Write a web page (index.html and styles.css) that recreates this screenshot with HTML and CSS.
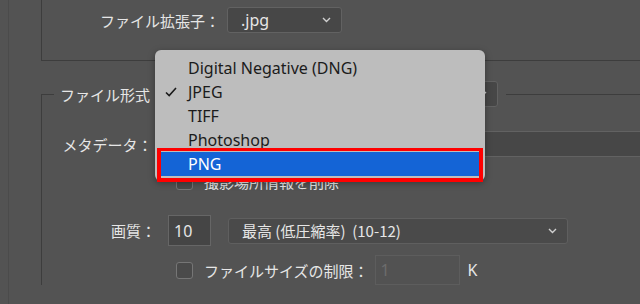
FILE: index.html
```html
<!DOCTYPE html>
<html lang="ja">
<head>
    <meta charset="UTF-8">
    <title>書き出し形式</title>
    <link rel="stylesheet" href="styles.css">
</head>
<body>
    <div class="panel">
        <div class="panel-inner">
            <div class="group-top">
                <div class="row-top">
                    <span class="label">ファイル拡張子：</span>
                    <div class="select select-ext">
                        <span>.jpg</span>
                        <svg class="chevron" width="9" height="6" viewBox="0 0 9 6"><polyline points="1,1 4.5,4.5 8,1"/></svg>
                    </div>
                </div>
            </div>

            <fieldset class="group-format">
                <legend>
                    <span class="legend-label">ファイル形式：</span>
                    <div class="select select-format">
                        <span></span>
                        <svg class="chevron" width="9" height="6" viewBox="0 0 9 6"><polyline points="1,1 4.5,4.5 8,1"/></svg>
                    </div>
                </legend>

                <div class="row row-meta">
                    <span class="label">メタデータ：</span>
                    <div class="select select-meta"></div>
                </div>

                <div class="row row-check">
                    <span class="checkbox"></span>
                    <span class="text">撮影場所情報を削除</span>
                </div>

                <div class="row row-quality">
                    <span class="label">画質：</span>
                    <div class="input input-quality">10</div>
                    <div class="select select-quality">
                        <span>最高 (低圧縮率)&nbsp; (10-12)</span>
                        <svg class="chevron" width="9" height="6" viewBox="0 0 9 6"><polyline points="1,1 4.5,4.5 8,1"/></svg>
                    </div>
                </div>

                <div class="row row-size">
                    <span class="checkbox"></span>
                    <span class="text">ファイルサイズの制限：</span>
                    <div class="input input-size">1</div>
                    <span class="text unit">K</span>
                </div>
            </fieldset>
        </div>
    </div>

    <!-- open format menu -->
    <div class="menu">
        <div class="menu-item">Digital Negative (DNG)</div>
        <div class="menu-item checked">
            <svg class="check" width="12" height="10" viewBox="0 0 12 10"><polyline points="1,5.5 4.2,8.6 11,1"/></svg>
            JPEG
        </div>
        <div class="menu-item">TIFF</div>
        <div class="menu-item">Photoshop</div>
        <div class="menu-item active">PNG</div>
    </div>
</body>
</html>
```

FILE: styles.css
```css
:root {
    --bg-color: #535353;
    --line-color: #3d3d3d;
    --field-color: #474747;
    --field-border: #626262;
    --text-color: #e6e6e6;
    --menu-color: #bdbdbd;
    --highlight-color: #1464d6;
}

html, body {
    margin: 0;
    padding: 0;
    height: 100%;
    overflow: hidden;
}

body {
    background-color: var(--bg-color);
    font-family: "Noto Sans CJK JP", "Noto Sans", sans-serif;
    font-size: 15px;
    color: var(--text-color);
    position: relative;
}

.panel {
    height: 100%;
    padding-left: 8px;
}

.panel-inner {
    height: 100%;
    border-left: 1px solid #4b4b4b;
    padding-left: 32px;
}

/* top group, only its left and bottom edge are on screen */
.group-top {
    box-sizing: border-box;
    height: 61px;
    margin-right: -10px;
    border-left: 1px solid var(--line-color);
    border-bottom: 1px solid var(--line-color);
}

.row-top {
    display: flex;
    align-items: center;
    padding-top: 7px;
    padding-left: 58px;
}

.row-top .label {
    width: 120px;
    margin-right: 7px;
}

.select {
    box-sizing: border-box;
    display: flex;
    align-items: center;
    justify-content: space-between;
    height: 26px;
    background-color: var(--field-color);
    border: 1px solid var(--field-border);
    border-radius: 3px;
    padding: 0 10px 0 13px;
    white-space: nowrap;
}

.chevron polyline {
    fill: none;
    stroke: #d0d0d0;
    stroke-width: 1.4;
}

.select-ext {
    width: 115px;
    font-family: "Noto Sans", sans-serif;
    font-size: 16px;
}

/* file format group */
.group-format {
    margin: 20px -10px 0 0;
    padding: 0;
    border: none;
    border-top: 1px solid var(--line-color);
    border-left: 1px solid var(--line-color);
    min-width: 0;
}

.group-format legend {
    display: flex;
    align-items: center;
    margin-left: 12px;
    padding: 0 8px 0 6px;
}

.legend-label {
    width: 105px;
    margin-right: 8px;
}

.select-format {
    width: 325px;
}

.row {
    display: flex;
    align-items: center;
}

.row .label {
    width: 114px;
    margin-right: 12px;
    text-align: right;
}

.row-meta {
    margin-top: 24px;
    height: 26px;
}

.select-meta {
    width: 500px;
}

.row-check {
    margin-top: 14px;
    height: 20px;
    padding-left: 134px;
}

.checkbox {
    box-sizing: border-box;
    width: 17px;
    height: 17px;
    border: 1px solid #767676;
    border-radius: 3px;
    background-color: #4a4a4a;
    margin-right: 11px;
    flex-shrink: 0;
}

.row-quality {
    margin-top: 24px;
    height: 31px;
}

.input {
    box-sizing: border-box;
    display: flex;
    align-items: center;
    background-color: #454545;
    border: 1px solid #666;
    padding-left: 5px;
    font-family: "Noto Sans", sans-serif;
    font-size: 16px;
}

.input-quality {
    width: 43px;
    height: 31px;
    margin-right: 17px;
}

.select-quality {
    width: 340px;
    background-color: #4a4a4a;
    border-color: #5f5f5f;
}

.row-size {
    margin-top: 9px;
    height: 30px;
    padding-left: 134px;
}

.input-size {
    width: 85px;
    height: 30px;
    margin: 0 8px 0 6px;
    background-color: #525252;
    border-color: #5d5d5d;
    color: #6c6c6c;
}

.unit {
    font-family: "Noto Sans", sans-serif;
    font-size: 16px;
}

/* popup menu over the format select */
.menu {
    position: absolute;
    left: 155px;
    top: 50px;
    width: 330px;
    box-sizing: border-box;
    padding: 6px 4px 5px 4px;
    background-color: var(--menu-color);
    border-radius: 6px;
    box-shadow: 0 2px 7px rgba(0, 0, 0, 0.35);
    font-family: "Noto Sans", sans-serif;
    font-size: 16px;
    color: #1b1b1b;
}

.menu-item {
    position: relative;
    height: 24px;
    line-height: 24px;
    padding-left: 29px;
    white-space: nowrap;
}

.check {
    position: absolute;
    left: 6px;
    top: 7px;
}

.check polyline {
    fill: none;
    stroke: #1b1b1b;
    stroke-width: 1.6;
}

.menu-item.active {
    background-color: var(--highlight-color);
    color: #fff;
}

/* red marker drawn round the chosen item */
.menu-item.active::after {
    content: "";
    position: absolute;
    left: -2px;
    right: -2px;
    top: -4px;
    bottom: -6px;
    border: 4px solid #ff0000;
    border-top-width: 3px;
}
```
